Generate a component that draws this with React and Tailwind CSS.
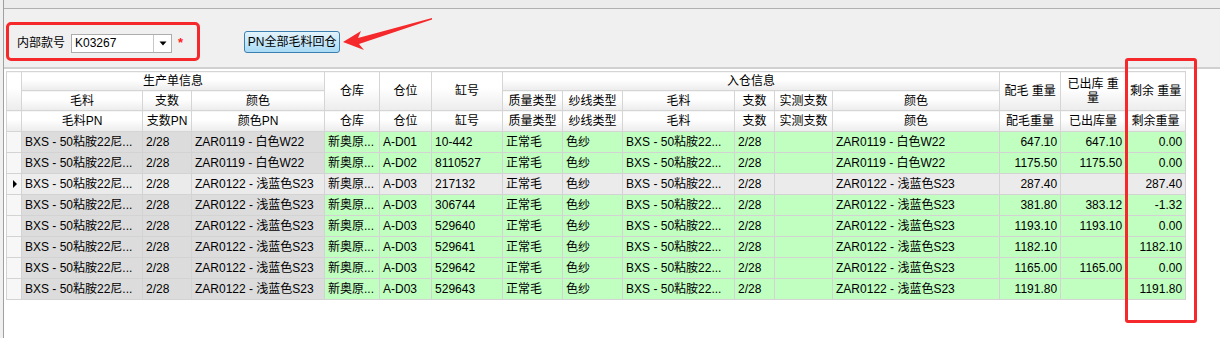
import React from "react";

const cols = [15, 121, 49, 133, 55, 52, 71, 60, 60, 112, 40, 58, 167, 61, 65, 60];

const rows = [
  ["ZAR0119 - 白色W22", "A-D01", "10-442", "647.10", "647.10", "0.00"],
  ["ZAR0119 - 白色W22", "A-D02", "8110527", "1175.50", "1175.50", "0.00"],
  ["ZAR0122 - 浅蓝色S23", "A-D03", "217132", "287.40", "", "287.40"],
  ["ZAR0122 - 浅蓝色S23", "A-D03", "306744", "381.80", "383.12", "-1.32"],
  ["ZAR0122 - 浅蓝色S23", "A-D03", "529640", "1193.10", "1193.10", "0.00"],
  ["ZAR0122 - 浅蓝色S23", "A-D03", "529641", "1182.10", "", "1182.10"],
  ["ZAR0122 - 浅蓝色S23", "A-D03", "529642", "1165.00", "1165.00", "0.00"],
  ["ZAR0122 - 浅蓝色S23", "A-D03", "529643", "1191.80", "", "1191.80"],
];

const H = "border border-[#d5d5d5] bg-linear-to-b from-white from-40% to-[#ececec] font-normal text-center p-0 leading-[14px]";

function Row({ r, i }) {
  const sel = i === 2;
  const ro = sel ? "bg-[#ebebeb]" : "bg-[#dcdcdc]";
  const ed = sel ? "bg-[#ebebeb]" : "bg-[#c0ffc0]";
  const c = "border border-[#d3d3d3] px-[3px] whitespace-nowrap overflow-hidden p-0";
  const L = `${c} pl-[3px] text-left`;
  const R = `${c} pr-[3px] text-right`;
  return (
    <tr className="h-[21px]">
      <td className="border border-[#d3d3d3] bg-[#f7f7f7] p-0">
        {sel && (
          <svg width="15" height="20" viewBox="0 0 15 20" className="block">
            <polygon points="6,6 10,10 6,14" fill="#000" />
          </svg>
        )}
      </td>
      <td className={`${L} ${ro}`}>BXS - 50粘胺22尼...</td>
      <td className={`${L} ${ro}`}>2/28</td>
      <td className={`${L} ${ro}`}>{r[0]}</td>
      <td className={`${L} ${ed}`}>新奥原...</td>
      <td className={`${L} ${ed}`}>{r[1]}</td>
      <td className={`${L} ${ed}`}>{r[2]}</td>
      <td className={`${L} ${ed}`}>正常毛</td>
      <td className={`${L} ${ed}`}>色纱</td>
      <td className={`${L} ${ed}`}>BXS - 50粘胺22...</td>
      <td className={`${L} ${ed}`}>2/28</td>
      <td className={`${L} ${ed}`}></td>
      <td className={`${L} ${ed}`}>{r[0]}</td>
      <td className={`${R} ${ed}`}>{r[3]}</td>
      <td className={`${R} ${ed}`}>{r[4]}</td>
      <td className={`${R} ${ed}`}>{r[5]}</td>
    </tr>
  );
}

export default function App() {
  return (
    <div
      className="relative w-[1220px] h-[338px] overflow-hidden bg-[#f0f0f0] flex text-[12px] text-black"
      style={{ fontFamily: '"Liberation Sans", "Noto Sans CJK SC", sans-serif' }}
    >
      <div className="w-[4px] shrink-0 border-r border-[#a0a0a0]" />
      <div className="flex-1 flex flex-col">
        <div className="h-[9px] shrink-0 border-b border-[#b0b0b0] bg-[#ececec]" />
        <div className="h-[58px] shrink-0 flex items-start pt-[22px]">
          <div className="flex items-center pl-[13px] h-[22px] mt-[1px]">
            <span className="mr-[6px]">内部款号</span>
            <div className="w-[101px] h-[19px] bg-white border border-[#adadad] flex items-center">
              <span className="flex-1 pl-[3px] leading-[17px]">K03267</span>
              <div className="w-[18px] h-full border-l border-[#c8c8c8] flex items-center justify-center">
                <svg width="8" height="5" viewBox="0 0 8 5">
                  <polygon points="0.5,0.5 7.5,0.5 4,4.5" fill="#000" />
                </svg>
              </div>
            </div>
            <span className="ml-[6px] text-[#ff2020] font-bold text-[13px]">*</span>
          </div>
          <button className="ml-[61px] mt-[0px] w-[96px] h-[22px] rounded-[3px] border border-[#3c7fb1] bg-linear-to-b from-[#e3f4fc] to-[#a9daf5] text-[12px] leading-[20px] text-black">
            PN全部毛料回仓
          </button>
        </div>
        <div className="flex-1 bg-white border-t-2 border-[#d0d0d0] pt-[2px] pl-[2px]">
          <table className="table-fixed border-collapse" style={{ width: 1179 }}>
            <colgroup>
              {cols.map((w, i) => (
                <col key={i} style={{ width: w }} />
              ))}
            </colgroup>
            <thead>
              <tr className="h-[19px]">
                <th rowSpan={2} className={H} />
                <th colSpan={3} className={H}>生产单信息</th>
                <th rowSpan={2} className={H}>仓库</th>
                <th rowSpan={2} className={H}>仓位</th>
                <th rowSpan={2} className={H}>缸号</th>
                <th colSpan={6} className={H}>入仓信息</th>
                <th rowSpan={2} className={H}>配毛 重量</th>
                <th rowSpan={2} className={H}>已出库 重<br />量</th>
                <th rowSpan={2} className={H}>剩余 重量</th>
              </tr>
              <tr className="h-[20px]">
                <th className={H}>毛料</th>
                <th className={H}>支数</th>
                <th className={H}>颜色</th>
                <th className={H}>质量类型</th>
                <th className={H}>纱线类型</th>
                <th className={H}>毛料</th>
                <th className={H}>支数</th>
                <th className={H}>实测支数</th>
                <th className={H}>颜色</th>
              </tr>
              <tr className="h-[21px]">
                <th className={H} />
                <th className={H}>毛料PN</th>
                <th className={H}>支数PN</th>
                <th className={H}>颜色PN</th>
                <th className={H}>仓库</th>
                <th className={H}>仓位</th>
                <th className={H}>缸号</th>
                <th className={H}>质量类型</th>
                <th className={H}>纱线类型</th>
                <th className={H}>毛料</th>
                <th className={H}>支数</th>
                <th className={H}>实测支数</th>
                <th className={H}>颜色</th>
                <th className={H}>配毛重量</th>
                <th className={H}>已出库量</th>
                <th className={H}>剩余重量</th>
              </tr>
            </thead>
            <tbody>
              {rows.map((r, i) => (
                <Row key={i} r={r} i={i} />
              ))}
            </tbody>
          </table>
        </div>
      </div>

      {/* annotations */}
      <div className="absolute left-[6px] top-[22px] w-[194px] h-[39px] border-[3px] border-[#f5292b] rounded-[5px] pointer-events-none" />
      <div className="absolute left-[1125px] top-[58px] w-[72px] h-[265px] border-[3px] border-[#f5292b] rounded-[3px] pointer-events-none" />
      <svg className="absolute left-0 top-0 pointer-events-none" width="1220" height="338">
        <polygon
          points="343,42 361,31 358,38 432,18 432,19.5 359,44 364,50"
          fill="#f5292b"
        />
      </svg>
    </div>
  );
}
